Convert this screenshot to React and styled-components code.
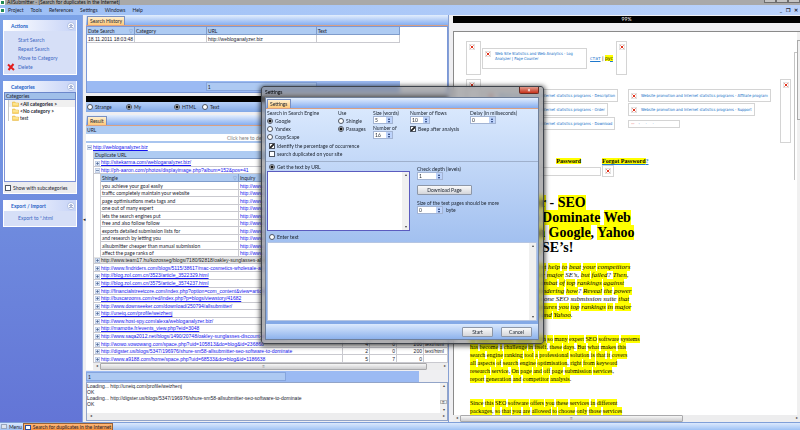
import React from 'react';
import styled, { createGlobalStyle } from 'styled-components';

const MENU = ['Project', 'Tools', 'References', 'Settings', 'Windows', 'Help'];
const ACTIONS = ['Start Search', 'Repeat Search', 'Move to Category'];
const SHINGLES = [
  'you achieve your goal easily',
  'traffic completely maintain your website',
  'page optimisations meta tags and',
  'one out of many expert',
  'lets the search engines put',
  'free and also follow follow',
  'exports detailed submission lists for',
  'and research by letting you',
  'allsubmitter cheaper than manual submission',
  'affect the page ranks of',
];
const RESULTS = [
  { url: 'http://www.team17.hu/kozosseg/blogs/7180/92818/oakley-sunglasses-all-submitter', current: true },
  { url: 'http://www.findriders.com/blogs/5115/38617/mac-cosmetics-wholesale-all-submitter' },
  { url: 'http://blog.zol.com.cn/3523/article_3522329.html' },
  { url: 'http://blog.zol.com.cn/3575/article_3574237.html' },
  { url: 'http://financialstreetcore.com/index.php?option=com_content&view=article&id=51' },
  { url: 'http://buscarooms.com/red/index.php?p=blogs/viewstory/41682' },
  { url: 'http://www.downseeker.com/download/250794/allsubmitter/' },
  { url: 'http://uneiq.com/profile/weizhenj' },
  { url: 'http://www.host-spy.com/alexa/webloganalyzer.biz/' },
  { url: 'http://mamotte.fr/events_view.php?eid=3048' },
  { url: 'http://www.saqa2012.net/blogs/1490/20748/oakley-sunglasses-discount-allsubmitter' },
  { url: 'http://wowo.vowowang.com/space.php?uid=105813&do=blog&id=236868', cells: ['4', '0', '200', 'text/html'] },
  {
    url: 'http://digster.us/blogs/5347/196976/shure-sm58-allsubmitter-seo-software-to-dominate',
    cells: ['2', '0', '200', 'text/html'],
  },
  { url: 'http://www.a9188.com/home/space.php?uid=68533&do=blog&id=1186638', cells: ['5', '7', '0', ''] },
];
const LOG = [
  'Loading... http://uneiq.com/profile/weizhenj',
  'OK',
  'Loading... http://digster.us/blogs/5347/196976/shure-sm58-allsubmitter-seo-software-to-dominate',
  'OK',
];
const PROMO = 'Website promotion and Internet statistics programs - ';

// a leading ~ keeps the word without highlight
const HEADING = ['Allsubmitter ~- SEO', 'Software to Dominate Web', 'Rankings on Google, Yahoo', 'many other ~SE’s!'];
const PITCH = [
  'Have you often used expert help to beat your competitors',
  'on Google and many other major ~SE’s, but failed? Then,',
  'you are certainly in the combat of top rankings against',
  'outranking the others. Wondering how? Reveal the power',
  'of powerful submission in ~one ~SEO ~submission ~suite that',
  'helps you optimise and assures you top rankings in major',
  'popular engines, Google and Yahoo.',
];
const ABOUT = [
  'In today’s Internet market, with so many expert SEO software systems',
  'has become a challenge in itself, these days. But what makes this',
  'search engine ranking tool a professional solution is that it covers',
  'all aspects of search engine optimisation, right from keyword',
  'research service, On page and off page submission services,',
  'report generation and competitor analysis.',
];
const SERVICES = [
  'Since this SEO software offers you these services in different',
  'packages, so that you are allowed to choose only those services',
];

const Highlighted = ({ text }) =>
  text.split(' ').map((word, idx) => {
    if (word[0] === '~') return <React.Fragment key={idx}>{word.slice(1)} </React.Fragment>;
    const [, body, tail] = word.match(/^(.*?)([,.?]?)$/);
    return (
      <React.Fragment key={idx}>
        <Mark>{body}</Mark>
        {tail}{' '}
      </React.Fragment>
    );
  });

const Lines = ({ items }) =>
  items.map(line => (
    <Line key={line}>
      <Highlighted text={line} />
    </Line>
  ));

const Chevron = () => (
  <svg width="8" height="8" viewBox="0 0 16 16">
    <circle cx="8" cy="8" r="7" fill="#fff" stroke="#9fb2dc" strokeWidth="1.5" />
    <path d="M5 8l3-3 3 3M5 12l3-3 3 3" fill="none" stroke="#26459c" strokeWidth="1.6" />
  </svg>
);

const Folder = () => (
  <svg width="7" height="6" viewBox="0 0 14 12">
    <path d="M1 2h5l1 2h6v7H1z" fill="#fbd768" stroke="#e2b03a" />
    <path d="M2 6h10" stroke="#fff1b5" strokeWidth="2" />
  </svg>
);

const DeleteIcon = () => (
  <svg width="8" height="8" viewBox="0 0 16 16">
    <path d="M2 3l12 11M13 2L3 14" stroke="#e11f1f" strokeWidth="4" />
  </svg>
);

const Broken = () => (
  <svg width="6" height="6" viewBox="0 0 12 12">
    <path d="M.5.5h11v11H.5z" fill="#fff" stroke="#b9b9b9" />
    <path d="M3 3l6 6M9 3L3 9" stroke="#e0321c" strokeWidth="2" />
  </svg>
);

const Toggle = ({ open }) => (
  <svg width="5" height="5" viewBox="0 0 10 10">
    <path d="M.5.5h9v9h-9z" fill="#dfe9f8" stroke="#8ba3c9" />
    <path d={open ? 'M2 5h6' : 'M2 5h6M5 2v6'} stroke="#3b5686" strokeWidth="1.2" />
  </svg>
);

const HScroll = ({ grip }) => (
  <HBar>
    <Arrow>◂</Arrow>
    {grip ? <HThumb $grow={grip}>≡</HThumb> : null}
    <HRest />
    <Arrow>▸</Arrow>
  </HBar>
);

const VScroll = ({ children }) => (
  <VBar>
    <Arrow>▴</Arrow>
    {children}
    <Arrow>▾</Arrow>
  </VBar>
);

const Spin = ({ label, value, wide, unit }) => (
  <Field>
    {label}
    <SpinRow>
      <SpinBox $wide={wide}>
        <input type="text" defaultValue={value} />
        <SpinButtons>
          <button type="button" aria-label="Up">▴</button>
          <button type="button" aria-label="Down">▾</button>
        </SpinButtons>
      </SpinBox>
      {unit}
    </SpinRow>
  </Field>
);

const Option = ({ name, label, on, type = 'radio' }) => (
  <OptionLabel>
    <OptionInput type={type} name={name} defaultChecked={on} />
    {label}
  </OptionLabel>
);

const Sidebar = () => (
  <Side>
    <Panel>
      <PanelHead>
        Actions
        <Chevron />
      </PanelHead>
      <PanelBody>
        {ACTIONS.map(action => (
          <SideLink href="#" key={action}>{action}</SideLink>
        ))}
        <SideLink href="#" $icon>
          <DeleteIcon />
          Delete
        </SideLink>
      </PanelBody>
    </Panel>
    <Panel>
      <PanelHead>
        Categories
        <Chevron />
      </PanelHead>
      <TreeHead>Categories</TreeHead>
      <Tree>
        <TreeItem $bold $active><Folder />&lt;All categories &gt;</TreeItem>
        <TreeItem $bold><Folder />&lt;No category &gt;</TreeItem>
        <TreeItem><Folder />test</TreeItem>
      </Tree>
      <PanelFoot>
        <Option type="checkbox" name="sub" label="Show with subcategories" />
      </PanelFoot>
    </Panel>
    <Panel>
      <PanelHead>
        Export / Import
        <Chevron />
      </PanelHead>
      <PanelBody $short>
        <SideLink href="#">Export to *.html</SideLink>
      </PanelBody>
    </Panel>
  </Side>
);

const History = () => (
  <>
    <TabStrip>
      <Tab type="button">Search History</Tab>
    </TabStrip>
    <HistoryBox>
      <HistoryTable>
        <colgroup>
          <col width="48" />
          <col width="23%" />
          <col width="35%" />
          <col />
        </colgroup>
        <thead>
          <tr>
            <Th><HeadCell>Date Search<SortMark>▽</SortMark></HeadCell></Th>
            <Th>Category</Th>
            <Th>URL</Th>
            <Th>Text</Th>
          </tr>
        </thead>
        <tbody>
          <Row>
            <Td>18.11.2011 18:03:48</Td>
            <Td />
            <Td>http://webloganalyzer.biz</Td>
            <Td />
          </Row>
        </tbody>
      </HistoryTable>
      <HistoryFoot>
        <FootCell>1</FootCell>
      </HistoryFoot>
    </HistoryBox>
  </>
);

const Results = () => (
  <ResultBox>
    <ColumnHead>URL</ColumnHead>
    <FilterRow>Click here to define a filter</FilterRow>
    <GroupRow>
      <Toggle open />
      <Link href="#">http://webloganalyzer.biz</Link>
    </GroupRow>
    <ResultTable>
      <colgroup>
        <col />
        <col width="27" />
        <col width="27" />
        <col width="27" />
        <col width="24" />
      </colgroup>
      <thead>
        <tr>
          <Th colSpan={5}>Duplicate URL</Th>
        </tr>
      </thead>
      <tbody>
        <Row>
          <Td colSpan={5}><Toggle /><Link href="#">http://sitekarma.com/webloganalyzer.biz/</Link></Td>
        </Row>
        <Row>
          <Td colSpan={5}>
            <Toggle open />
            <Link href="#">http://ph-aaron.com/photos/displayimage.php?album=152&amp;pos=41</Link>
          </Td>
        </Row>
        <tr>
          <Nest colSpan={5}>
            <ShingleTable>
              <colgroup>
                <col width="138" />
                <col />
              </colgroup>
              <thead>
                <tr>
                  <Th><HeadCell>Shingle<SortMark>▽</SortMark></HeadCell></Th>
                  <Th>Inquiry</Th>
                </tr>
              </thead>
              <tbody>
                {SHINGLES.map(shingle => (
                  <Row key={shingle}>
                    <ShingleCell>{shingle}</ShingleCell>
                    <Td><Link href="#">http://www.google.com/search</Link></Td>
                  </Row>
                ))}
              </tbody>
            </ShingleTable>
          </Nest>
        </tr>
        {RESULTS.map(({ url, current, cells = ['', '', '', ''] }) => (
          <Row key={url} $current={current}>
            <Td><Toggle /><Link href="#" $dark={current}>{url}</Link></Td>
            {cells.map((cell, idx) => (
              <Td key={idx} $right={idx < 3}>{cell}</Td>
            ))}
          </Row>
        ))}
      </tbody>
    </ResultTable>
    <Indent>
      <HScroll grip={24} />
    </Indent>
  </ResultBox>
);

const Browser = () => (
  <BrowserPane>
    <BlackBar>99%</BlackBar>
    <AddressGap />
    <Viewport>
      <Page>
        <PageHead>
          <HeadRows>
            <BannerRow>
              <Frame $w={15} $h={34}><Broken /></Frame>
              <Frame $w={105} $h={21}>
                <Broken />
                <span>Web Site Statistics and Web Analytics - Log<br />Analyzer | Page Counter</span>
              </Frame>
              <Langs>
                <a href="#">стат</a> | <a href="#"><Mark>рус</Mark></a>
              </Langs>
              <Frame $w={11} $h={34}><Broken /></Frame>
            </BannerRow>
            <NavRow>
              <Frame $w={15} $h={64}><Broken /></Frame>
              <NavGrid>
                <Frame $h={13} $mid><Broken />{PROMO}Description</Frame>
                <Frame $h={13} $mid><Broken />{PROMO}Affiliate program</Frame>
                <Frame $h={13} $mid><Broken />{PROMO}Order</Frame>
                <Frame $h={13} $mid><Broken />{PROMO}Support</Frame>
                <Frame $h={13} $mid><Broken />{PROMO}Download</Frame>
                <Frame $w={52} $h={8} $mid><Dash>—</Dash> - &nbsp; &nbsp; · &nbsp; &nbsp; · </Frame>
              </NavGrid>
              <Frame $w={11} $h={64}><Broken /></Frame>
            </NavRow>
            <LoginRow>
              <LoginField>
                <label htmlFor="pass"><Mark>Password</Mark></label>
                <LoginInput id="pass" type="password" />
              </LoginField>
              <div>
                <a href="#"><Mark>Forgot Password</Mark>?</a>
                <Frame $w={12} $h={12}><Broken /></Frame>
              </div>
            </LoginRow>
          </HeadRows>
          <FrameLine />
        </PageHead>
        <Title><Lines items={HEADING} /></Title>
        <Pitch><Lines items={PITCH} /></Pitch>
        <Paragraph><Lines items={ABOUT} /></Paragraph>
        <Paragraph><Lines items={SERVICES} /></Paragraph>
      </Page>
      <PageScroll><PageThumb /></PageScroll>
    </Viewport>
    <HScroll grip={2} />
  </BrowserPane>
);

const SettingsDialog = () => (
  <Dialog role="dialog" aria-label="Settings">
    <DialogTitle>
      Settings
      <CloseButton type="button" aria-label="Close">×</CloseButton>
    </DialogTitle>
    <Client>
      <TabStrip>
        <Tab type="button">Settings</Tab>
      </TabStrip>
      <DialogBody>
        <TopGrid>
          <Column $w={71}>
            <span>Search in Search Engine</span>
            <Option name="engine" label="Google" on />
            <Option name="engine" label="Yandex" />
            <Option name="engine" label="CopyScape" />
          </Column>
          <Column $w={35}>
            <span>Use</span>
            <Option name="use" label="Shingle" />
            <Option name="use" label="Passages" on />
          </Column>
          <Column $w={37}>
            <Spin label="Size (words)" value="5" />
            <Spin label="Number of" value="16" />
          </Column>
          <Column $w={60}>
            <Spin label="Number of flows" value="10" />
            <Option type="checkbox" name="beep" label="Beep after analysis" on />
          </Column>
          <Column>
            <Spin label="Delay (in miliseconds)" value="0" wide />
          </Column>
        </TopGrid>
        <Checks>
          <Option type="checkbox" name="identify" label="Identify the percentage of occurrence" on />
          <Option type="checkbox" name="site" label="search duplicated on your site" />
        </Checks>
        <Divider />
        <SourceRow>
          <UrlColumn>
            <Option name="source" label="Get the text by URL" on />
            <AreaBox $focus>
              <textarea aria-label="URL list" />
              <VScroll />
            </AreaBox>
          </UrlColumn>
          <DepthColumn>
            <Spin label="Check depth (levels)" value="1" wide />
            <Button type="button" $w={55}>Download Page</Button>
            <Spin label="Size of the text pages should be more" value="0" wide unit="byte" />
          </DepthColumn>
        </SourceRow>
        <Option name="source" label="Enter text" />
        <AreaBox $tall>
          <textarea aria-label="Text" />
          <VScroll />
        </AreaBox>
      </DialogBody>
      <DialogFoot>
        <Button type="button" $w={31}>Start</Button>
        <Button type="button" $w={31}>Cancel</Button>
      </DialogFoot>
    </Client>
  </Dialog>
);

const App = () => (
  <Window>
    <GlobalStyle />
    <TitleBar>
      <AppIcon />
      AllSubmitter - [Search for duplicates in the Internet]
      <WindowButtons><i /><i /><i /></WindowButtons>
    </TitleBar>
    <MenuBar>
      <AppIcon />
      {MENU.map(item => (
        <MenuItem type="button" key={item}>{item}</MenuItem>
      ))}
      <ChildButtons>
        <span>_</span>
        <span>❐</span>
        <span>✕</span>
      </ChildButtons>
    </MenuBar>
    <Main>
      <Sidebar />
      <Splitter>◂</Splitter>
      <Center>
        <History />
        <BlackBar $gap />
        <ModeBar>
          <Option name="mode" label="Strange" />
          <Option name="mode" label="My" on />
          <Option name="format" label="HTML" on />
          <Option name="format" label="Text" />
        </ModeBar>
        <Gap />
        <TabStrip>
          <Tab type="button">Result</Tab>
        </TabStrip>
        <Results />
        <CountBar>
          <FootCell $start>1</FootCell>
        </CountBar>
        <LogBox>
          <LogMain>
            <LogText>{LOG.map((line, idx) => <div key={idx}>{line}</div>)}</LogText>
            <VScroll><LogThumb>≡</LogThumb></VScroll>
          </LogMain>
          <HScroll />
        </LogBox>
      </Center>
      <Browser />
    </Main>
    <TaskBar>
      <TaskButton type="button"><TaskIcon $pale />Menu</TaskButton>
      <TaskButton type="button" $active><TaskIcon />Search for duplicates in the Internet</TaskButton>
    </TaskBar>
    <SettingsDialog />
  </Window>
);

export default App;

const GlobalStyle = createGlobalStyle`
  * {
    box-sizing: border-box;
  }
  body {
    margin: 0;
    font-family: Lato, 'Liberation Sans', sans-serif;
    font-size: 5px;
    line-height: 6px;
    color: #1c2430;
  }
  button, input, textarea {
    font: inherit;
    color: inherit;
    margin: 0;
    padding: 0;
    border: 0;
    outline: 0;
  }
  svg {
    flex: none;
  }
`;
const Window = styled.div`
  position: relative;
  display: flex;
  flex-direction: column;
  height: 100vh;
  overflow: hidden;
  background: #efeff2;
`;
const TitleBar = styled.div`
  display: flex;
  align-items: flex-end;
  gap: 2px;
  height: 5px;
  overflow: hidden;
  background: #a9a9a9;
  color: #111;
`;
const AppIcon = styled.i`
  width: 5px;
  height: 5px;
  border: 1px solid #fff;
  background: #1f8a55;
`;
const WindowButtons = styled.div`
  display: flex;
  align-self: flex-start;
  margin-left: auto;
  i {
    width: 12px;
    height: 3px;
    border: 1px solid #6e6e6e;
    border-top: 0;
    background: #c4c4c4;
  }
`;
const MenuBar = styled.div`
  display: flex;
  align-items: center;
  gap: 7px;
  height: 10px;
  background: linear-gradient(90deg, #9dbff5, #bad2fb);
  ${AppIcon} {
    margin-right: -4px;
  }
`;
const MenuItem = styled.button`
  background: none;
`;
const ChildButtons = styled.div`
  display: flex;
  gap: 4px;
  margin-left: auto;
  padding-right: 2px;
  font-weight: bold;
`;
const Main = styled.div`
  flex: 1;
  min-height: 0;
  display: grid;
  grid-template-columns: 82px 4px minmax(0, 363fr) 4px minmax(0, 347fr);
  grid-template-rows: minmax(0, 1fr);
`;
const Side = styled.div`
  display: flex;
  flex-direction: column;
  gap: 6px;
  padding: 5px 5px 0 3px;
  background: linear-gradient(#7ba2e7, #6375d6);
`;
const Panel = styled.div`
  display: flex;
  flex-direction: column;
  background: #d6dff7;
  border: 1px solid #fff;
  border-top: 0;
`;
const PanelHead = styled.div`
  display: flex;
  align-items: center;
  justify-content: space-between;
  height: 11px;
  padding: 0 1px 0 7px;
  background: linear-gradient(90deg, #fff, #c6d3f7);
  font-weight: bold;
  color: #215dc6;
`;
const PanelBody = styled.div`
  display: flex;
  flex-direction: column;
  gap: 3px;
  padding: ${({ $short }) => ($short ? '4px 14px 5px' : '6px 14px 4px')};
`;
const SideLink = styled.a`
  display: flex;
  align-items: center;
  gap: 3px;
  height: 6px;
  margin-left: ${({ $icon }) => ($icon ? '-11px' : '0')};
  color: #3c68c4;
  text-decoration: none;
`;
const TreeHead = styled.div`
  height: 8px;
  padding: 1px;
  background: #a0bfe9;
  border: 1px solid #6b87cb;
  line-height: 5px;
`;
const Tree = styled.div`
  height: 82px;
  padding-left: 3px;
  background: #fff;
  border: 1px solid #7f93d6;
  border-top: 0;
`;
const TreeItem = styled.div`
  display: flex;
  align-items: center;
  gap: 1px;
  height: 7px;
  padding-left: 3px;
  border-left: 1px solid #c8c8c8;
  font-weight: ${({ $bold }) => ($bold ? 'bold' : 'normal')};
  background: ${({ $active }) => ($active ? '#f0f0f0' : 'none')};
`;
const PanelFoot = styled.div`
  display: flex;
  align-items: center;
  height: 11px;
  padding-left: 1px;
  background: #ececef;
`;
const Splitter = styled.div`
  display: flex;
  align-items: center;
  border-left: 1px solid #8ba6de;
`;
const Center = styled.div`
  display: flex;
  flex-direction: column;
  border-right: 1px solid #86a0d4;
`;
const TabStrip = styled.div`
  display: flex;
  align-items: flex-end;
  flex: none;
  height: 11px;
  padding-left: 1px;
  background: linear-gradient(#e3eefd, #86aef0);
  border-bottom: 1px solid #d8a083;
`;
const Tab = styled.button`
  height: 9px;
  padding: 0 2px;
  border: 1px solid #7a8fc0;
  border-bottom: 0;
  background: linear-gradient(#fff0cf, #ffc878);
`;
const HistoryBox = styled.div`
  display: flex;
  flex-direction: column;
  flex: none;
  height: 67px;
  background: #fff;
  border: 1px solid #7b98d8;
`;
const HistoryTable = styled.table`
  width: 87%;
  table-layout: fixed;
  border-spacing: 0;
`;
const Th = styled.th`
  height: 8px;
  padding: 0 1px;
  text-align: left;
  font-weight: normal;
  background: #aecbf2;
  border-right: 1px solid #7f9ccb;
  border-bottom: 1px solid #7f9ccb;
`;
const HeadCell = styled.div`
  display: flex;
  justify-content: space-between;
`;
const SortMark = styled.span`
  color: #7089b5;
`;
const Row = styled.tr`
  height: 8px;
  background: ${({ $current }) => ($current ? '#e4e4e4' : '#fff')};
  &:nth-child(even) {
    height: 7px;
  }
`;
const Td = styled.td`
  height: inherit;
  padding: 0 1px;
  overflow: hidden;
  white-space: nowrap;
  font-family: 'Liberation Sans', sans-serif;
  text-align: ${({ $right }) => ($right ? 'right' : 'left')};
  border-right: 1px solid #c9c9cf;
  border-bottom: 1px solid #c9c9cf;
  svg {
    vertical-align: middle;
    margin-right: 1px;
  }
`;
const ShingleCell = styled(Td)`
  font-family: Lato, 'Liberation Sans', sans-serif;
`;
const Nest = styled.td`
  padding: 0 0 0 6px;
`;
const HistoryFoot = styled.div`
  width: 87%;
  height: 11px;
  margin-top: auto;
  padding: 1px 23% 1px 33%;
  background: #9bbaf3;
`;
const FootCell = styled.div`
  width: ${({ $start }) => ($start ? '60%' : '100%')};
  height: 9px;
  padding: 1px;
  background: #adc9f2;
  border: 1px solid #86a5dd;
`;
const BlackBar = styled.div`
  flex: none;
  height: ${({ $gap }) => ($gap ? '6px' : '7px')};
  margin-top: ${({ $gap }) => ($gap ? '3px' : '1px')};
  background: #000;
  color: #fff;
  text-align: center;
`;
const ModeBar = styled.div`
  display: grid;
  grid-template-columns: 39px 48px 28px 1fr;
  align-items: center;
  flex: none;
  height: 10px;
  padding-left: 1px;
  background: linear-gradient(#b7d1fa, #81a8e6);
`;
const Gap = styled.div`
  flex: none;
  height: 3px;
`;
const ResultBox = styled.div`
  flex: 1;
  min-height: 0;
  overflow: hidden;
  display: flex;
  flex-direction: column;
  background: #fff;
`;
const ColumnHead = styled.div`
  flex: none;
  height: 8px;
  padding: 1px;
  background: #aecbf2;
`;
const FilterRow = styled.div`
  flex: none;
  height: 9px;
  padding: 1px 22px 0 0;
  text-align: center;
  color: #7c7c7c;
  border-bottom: 2px solid #a9c5ef;
`;
const GroupRow = styled.div`
  display: flex;
  align-items: center;
  gap: 1px;
  flex: none;
  height: 8px;
  padding-left: 1px;
`;
const Link = styled.a`
  font-family: 'Liberation Sans', sans-serif;
  color: ${({ $dark }) => ($dark ? '#222' : '#1414f0')};
`;
const ResultTable = styled.table`
  flex: none;
  width: calc(100% - 7px);
  margin-left: 7px;
  table-layout: fixed;
  border-spacing: 0;
  border-left: 1px solid #c9c9cf;
`;
const ShingleTable = styled.table`
  width: 100%;
  table-layout: fixed;
  border-spacing: 0;
  border-left: 1px solid #c9c9cf;
`;
const Indent = styled.div`
  margin-top: auto;
  padding-left: 7px;
`;
const HBar = styled.div`
  display: flex;
  flex: none;
  height: 7px;
  background: #ededee;
`;
const Arrow = styled.span`
  flex: none;
  width: 7px;
  text-align: center;
  font-size: 4px;
  color: #444;
`;
const HThumb = styled.div`
  flex: ${({ $grow }) => $grow};
  text-align: center;
  line-height: 4px;
  color: #777;
  background: linear-gradient(#f6f6f6, #cdcdcf);
  border: 1px solid #a9a9ab;
  border-radius: 1px;
`;
const HRest = styled.div`
  flex: 1;
`;
const VBar = styled.div`
  display: flex;
  flex-direction: column;
  justify-content: space-between;
  flex: none;
  width: 7px;
  background: #f0f0f0;
`;
const CountBar = styled.div`
  flex: none;
  width: 92%;
  height: 11px;
  margin-top: 1px;
  padding: 1px 0;
  background: #9bbaf3;
`;
const LogBox = styled.div`
  display: flex;
  flex-direction: column;
  flex: none;
  height: 39px;
  margin-bottom: 1px;
  background: #fff;
  border: 1px solid #92a4c8;
`;
const LogMain = styled.div`
  display: flex;
  flex: 1;
`;
const LogText = styled.div`
  flex: 1;
  font-family: 'Liberation Sans', sans-serif;
`;
const LogThumb = styled.div`
  margin-top: 8px;
  height: 4px;
  line-height: 3px;
  text-align: center;
  border: 1px solid #bbb;
`;
const BrowserPane = styled.div`
  grid-column: 5;
  display: flex;
  flex-direction: column;
`;
const AddressGap = styled.div`
  flex: none;
  height: 8px;
`;
const Viewport = styled.div`
  flex: 1;
  min-height: 0;
  display: flex;
  background: #fff;
  border-top: 1px solid #8a8a8a;
  border-left: 1px solid #8a8a8a;
`;
const Page = styled.div`
  flex: 1;
  overflow: hidden;
  white-space: nowrap;
  font-family: 'Liberation Serif', serif;
  font-size: 7px;
  line-height: 8px;
  color: #000;
`;
const PageScroll = styled.div`
  width: 3px;
  padding-top: 8px;
  background: #f0f0f0;
`;
const PageThumb = styled.div`
  height: 80px;
  border: 1px solid #aaa;
  border-right: 0;
`;
const PageHead = styled.div`
  display: flex;
  height: 148px;
  font-family: 'DejaVu Sans Condensed', 'DejaVu Sans', sans-serif;
  font-size: 4px;
  line-height: 5px;
`;
const HeadRows = styled.div`
  flex: 1;
  display: flex;
  flex-direction: column;
  gap: 4px;
  padding: 9px 3px 0 12px;
`;
const FrameLine = styled.div`
  width: 3px;
  margin-top: 20px;
  border-left: 1px solid #c4c4c4;
  border-top: 1px solid #c4c4c4;
`;
const BannerRow = styled.div`
  display: flex;
  align-items: center;
  gap: 1px;
`;
const Frame = styled.div`
  display: flex;
  align-items: ${({ $mid }) => ($mid ? 'center' : 'flex-start')};
  gap: 4px;
  flex: none;
  width: ${({ $w }) => ($w ? `${$w}px` : 'max-content')};
  height: ${({ $h }) => $h}px;
  padding: ${({ $mid }) => ($mid ? '0 2px' : '2px')};
  border: 1px solid #d4d4d4;
  color: #0f6cc6;
`;
const Langs = styled.div`
  width: 27px;
  text-align: center;
  font-size: 5px;
  a {
    color: #1f78cc;
  }
`;
const Dash = styled.span`
  color: #d33;
`;
const NavRow = styled.div`
  display: flex;
  justify-content: space-between;
`;
const NavGrid = styled.div`
  display: grid;
  grid-template-columns: 143px 1fr;
  grid-auto-rows: 13px;
  row-gap: 1px;
  align-items: center;
  flex: 1;
  padding: 10px 0 0 4px;
`;
const LoginRow = styled.div`
  display: flex;
  gap: 1px;
  padding-top: 10px;
  font-family: 'Liberation Serif', serif;
  font-size: 6px;
  line-height: 8px;
  font-weight: bold;
  a {
    color: #1f78cc;
  }
`;
const LoginField = styled.div`
  display: flex;
  flex-direction: column;
  width: 135px;
  label {
    align-self: flex-end;
    margin-right: 20px;
  }
`;
const LoginInput = styled.input`
  height: 9px;
  margin-top: 2px;
  border: 1px solid #d4d4d4;
`;
const Mark = styled.mark`
  background: #ff0;
  color: #000;
`;
const Line = styled.span`
  display: block;
`;
const Title = styled.h1`
  margin: 15px 0 8px 16px;
  font-size: 14px;
  line-height: 15px;
`;
const Pitch = styled.p`
  margin: 0 0 0 16px;
  font-style: italic;
`;
const Paragraph = styled.p`
  margin: 16px 0 0 16px;
  font-size: 6px;
  ${Mark} {
    padding: 1px 0;
  }
`;
const TaskBar = styled.div`
  display: flex;
  flex: none;
  height: 8px;
  background: linear-gradient(#dbe9fd, #9fc2f5);
  border-top: 1px solid #7f9fd8;
`;
const TaskButton = styled.button`
  display: flex;
  align-items: center;
  gap: 2px;
  padding: 0 1px;
  background: ${({ $active }) => ($active ? 'linear-gradient(#ffb877, #f58f3c)' : 'none')};
  border: ${({ $active }) => ($active ? '1px solid #9a6236' : '0')};
  border-bottom: 0;
`;
const TaskIcon = styled.i`
  width: 6px;
  height: 5px;
  border: 1px solid ${({ $pale }) => ($pale ? '#9aa7bd' : '#2a4f9e')};
  background: ${({ $pale }) => ($pale ? '#dfe5ee' : '#fff')};
`;
const Dialog = styled.div`
  position: absolute;
  top: 86px;
  left: 261px;
  width: 283px;
  padding: 0 4px 3px 3px;
  border: 1px solid #3f444c;
  border-radius: 3px;
  background: rgba(125, 125, 128, 0.6);
  backdrop-filter: blur(2px);
  box-shadow: 0 1px 5px 1px rgba(0, 0, 0, 0.7);
`;
const DialogTitle = styled.div`
  display: flex;
  align-items: center;
  justify-content: space-between;
  height: 10px;
  color: #000;
`;
const CloseButton = styled.button`
  align-self: flex-start;
  width: 20px;
  height: 7px;
  line-height: 6px;
  border: 1px solid #6b2a20;
  border-top: 0;
  border-radius: 0 0 2px 2px;
  background: linear-gradient(#e09a8c, #c8331c);
  color: #fff;
  font-weight: bold;
`;
const Client = styled.div`
  border: 1px solid #6f7f99;
  background: #84a9e6;
`;
const DialogBody = styled.div`
  display: flex;
  flex-direction: column;
  padding: 1px;
  background: linear-gradient(#d9e8fd, #9fbeef 66%, #84a9e6);
`;
const TopGrid = styled.div`
  display: flex;
  height: 31px;
`;
const Column = styled.div`
  display: flex;
  flex-direction: column;
  flex: none;
  width: ${({ $w }) => ($w ? `${$w}px` : 'auto')};
  gap: 1px;
  white-space: nowrap;
`;
const OptionLabel = styled.label`
  display: flex;
  align-items: center;
  gap: 2px;
  height: 7px;
  white-space: nowrap;
`;
const OptionInput = styled.input`
  appearance: none;
  flex: none;
  width: 6px;
  height: 6px;
  border: 1px solid #4d5563;
  border-radius: ${({ type }) => (type === 'radio' ? '50%' : '0')};
  background: #fff;
  &:checked {
    background: ${({ type }) =>
      type === 'radio'
        ? 'radial-gradient(#111 1px, #fff 2px)'
        : 'linear-gradient(135deg, #fff 30%, #222 40%, #222 60%, #fff 70%)'};
  }
`;
const Field = styled.label`
  display: flex;
  flex-direction: column;
  white-space: nowrap;
`;
const SpinRow = styled.span`
  display: flex;
  align-items: center;
  gap: 3px;
`;
const SpinBox = styled.span`
  display: flex;
  width: ${({ $wide }) => ($wide ? '26px' : '20px')};
  height: 8px;
  background: #fff;
  border: 1px solid #a3b4d3;
  input {
    flex: 1;
    min-width: 0;
    padding-left: 1px;
    background: none;
  }
`;
const SpinButtons = styled.span`
  display: flex;
  flex-direction: column;
  button {
    width: 6px;
    height: 3px;
    line-height: 3px;
    font-size: 4px;
    background: #bdd3fb;
    color: #1b3570;
  }
`;
const Checks = styled.div`
  display: flex;
  flex-direction: column;
  gap: 1px;
  padding: 1px 0 4px 2px;
`;
const Divider = styled.div`
  height: 1px;
  margin: 0 -1px;
  background: #9fb0cc;
`;
const SourceRow = styled.div`
  display: flex;
  gap: 7px;
  padding-top: 1px;
  & + label {
    margin: 2px;
  }
`;
const UrlColumn = styled.div`
  width: 143px;
  label {
    margin: 0 2px 1px;
  }
`;
const AreaBox = styled.div`
  display: flex;
  height: ${({ $tall }) => ($tall ? '79px' : '60px')};
  background: #fff;
  border: 1px solid ${({ $focus }) => ($focus ? '#5b5bbf' : '#b5c5e2')};
  textarea {
    flex: 1;
    min-width: 0;
    resize: none;
    background: none;
  }
`;
const DepthColumn = styled.div`
  display: flex;
  flex-direction: column;
  align-items: flex-start;
  gap: 5px;
  padding-top: 3px;
`;
const Button = styled.button`
  width: ${({ $w }) => $w}px;
  height: 10px;
  border: 1px solid #8d97a8;
  border-radius: 1px;
  background: linear-gradient(#fafafa, #d4d6da);
`;
const DialogFoot = styled.div`
  display: flex;
  justify-content: flex-end;
  align-items: center;
  gap: 8px;
  height: 15px;
  margin-top: 2px;
  padding-right: 6px;
  background: linear-gradient(#dbe9fd, #8db2ec);
`;
